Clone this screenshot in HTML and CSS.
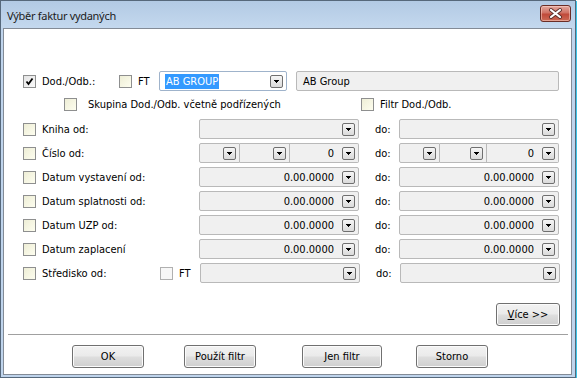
FILE: index.html
```html
<!DOCTYPE html>
<html lang="cs">
<head>
    <meta charset="UTF-8">
    <title>Výběr faktur vydaných</title>
    <link rel="stylesheet" href="styles.css">
</head>
<body>
    <div class="window">
        <div class="titlebar">
            <span class="title">Výběr faktur vydaných</span>
            <span class="close">
                <svg width="29" height="15" viewBox="0 0 29 15">
                    <path d="M10 4 L19 11 M19 4 L10 11" stroke="#5a2f2a" stroke-width="4" stroke-linecap="round"/>
                    <path d="M10 4 L19 11 M19 4 L10 11" stroke="#fff" stroke-width="2.2" stroke-linecap="round"/>
                </svg>
            </span>
        </div>

        <div class="client">
            <!-- odberatel -->
            <div class="row row-first">
                <span class="cb checked">
                    <svg width="11" height="11" viewBox="0 0 11 11"><path d="M2.5 5.5 L4.5 8 L8.5 2.5" stroke="#000" stroke-width="1.8" fill="none"/></svg>
                </span>
                <span class="lbl w-dod">Dod./Odb.:</span>
                <span class="cb"></span>
                <span class="lbl w-ft">FT</span>
                <div class="combo"><span class="sel">AB GROUP</span><span class="dd"></span></div>
                <div class="field name">AB Group</div>
            </div>

            <div class="row row-sub">
                <span class="cb"></span>
                <span class="lbl w-skup">Skupina Dod./Odb. včetně podřízených</span>
                <span class="cb"></span>
                <span class="lbl">Filtr Dod./Odb.</span>
            </div>

            <div class="row row-kniha">
                <span class="cb"></span>
                <span class="lbl w-main">Kniha od:</span>
                <div class="field od"><span class="val"></span><span class="dd"></span></div>
                <span class="lbl w-do">do:</span>
                <div class="field do"><span class="val"></span><span class="dd"></span></div>
            </div>

            <div class="row">
                <span class="cb"></span>
                <span class="lbl w-main">Číslo od:</span>
                <div class="split od">
                    <div class="field s1"><span class="val"></span><span class="dd"></span></div>
                    <div class="field s2"><span class="val"></span><span class="dd"></span></div>
                    <div class="field s3"><span class="val">0</span><span class="dd"></span></div>
                </div>
                <span class="lbl w-do">do:</span>
                <div class="split do">
                    <div class="field s1"><span class="val"></span><span class="dd"></span></div>
                    <div class="field s2"><span class="val"></span><span class="dd"></span></div>
                    <div class="field s3"><span class="val">0</span><span class="dd"></span></div>
                </div>
            </div>

            <div class="row">
                <span class="cb"></span>
                <span class="lbl w-main">Datum vystavení od:</span>
                <div class="field od"><span class="val">0.00.0000</span><span class="dd"></span></div>
                <span class="lbl w-do">do:</span>
                <div class="field do"><span class="val">0.00.0000</span><span class="dd"></span></div>
            </div>

            <div class="row">
                <span class="cb"></span>
                <span class="lbl w-main">Datum splatnosti od:</span>
                <div class="field od"><span class="val">0.00.0000</span><span class="dd"></span></div>
                <span class="lbl w-do">do:</span>
                <div class="field do"><span class="val">0.00.0000</span><span class="dd"></span></div>
            </div>

            <div class="row">
                <span class="cb"></span>
                <span class="lbl w-main">Datum UZP od:</span>
                <div class="field od"><span class="val">0.00.0000</span><span class="dd"></span></div>
                <span class="lbl w-do">do:</span>
                <div class="field do"><span class="val">0.00.0000</span><span class="dd"></span></div>
            </div>

            <div class="row">
                <span class="cb"></span>
                <span class="lbl w-main">Datum zaplacení</span>
                <div class="field od"><span class="val">0.00.0000</span><span class="dd"></span></div>
                <span class="lbl w-do">do:</span>
                <div class="field do"><span class="val">0.00.0000</span><span class="dd"></span></div>
            </div>

            <div class="row">
                <span class="cb"></span>
                <span class="lbl w-stred">Středisko od:</span>
                <span class="cb off"></span>
                <span class="lbl w-ft">FT</span>
                <div class="field od"><span class="val"></span><span class="dd"></span></div>
                <span class="lbl w-do">do:</span>
                <div class="field do"><span class="val"></span><span class="dd"></span></div>
            </div>

            <div class="more-row">
                <button class="btn btn-more"><u>V</u>íce &gt;&gt;</button>
            </div>

            <div class="separator"></div>

            <div class="buttons">
                <button class="btn btn-ok">OK</button>
                <button class="btn btn-use">Použít filtr</button>
                <button class="btn btn-only">Jen filtr</button>
                <button class="btn btn-cancel">Storno</button>
            </div>
        </div>
    </div>
</body>
</html>
```

FILE: styles.css
```css
* {
    box-sizing: border-box;
}
body {
    margin: 0;
    background: #fff;
    font-family: "DejaVu Sans Condensed", "DejaVu Sans", sans-serif;
    font-size: 11px;
    color: #000;
}
.window {
    width: 576px;
    height: 378px;
    display: flex;
    flex-direction: column;
    padding: 0 3px 2px 2px;
    background: #bfd4ec;
    border: 1px solid #56687b;
    box-shadow: 1px 1px 0 #3cc4e8;
}
.titlebar {
    height: 27px;
    margin: 0 -3px 0 -2px;
    padding: 4px 4px 0 6px;
    display: flex;
    justify-content: space-between;
    align-items: flex-start;
    background: linear-gradient(#b2cae4, #c4d8ee);
}
.title {
    align-self: center;
    margin-top: -3px;
    font-family: "Noto Sans", sans-serif;
    font-size: 11px;
    letter-spacing: -0.3px;
    color: #1b1b1b;
}
.close {
    width: 31px;
    height: 17px;
    display: flex;
    align-items: center;
    justify-content: center;
    border: 1px solid #6a2d26;
    border-radius: 3px;
    background: linear-gradient(#e3a99f, #d07264 45%, #c04a3a 55%, #cc6a55);
    box-shadow: inset 0 0 0 1px rgba(255, 220, 210, 0.5);
}
.client {
    flex: 1;
    display: flex;
    flex-direction: column;
    background: #fff;
    border: 1px solid #838b96;
}

/* rows */
.row {
    display: flex;
    align-items: center;
    height: 20px;
    margin-top: 4px;
    padding-left: 19px;
}
.row-first {
    margin-top: 42px;
}
.row-sub {
    height: 16px;
    margin-top: 5px;
    padding-left: 60px;
}
.row-kniha {
    margin-top: 7px;
}
.lbl {
    flex: none;
    white-space: nowrap;
    margin-left: 6px;
}
.w-dod { width: 77px; }
.w-ft { width: 21px; }
.w-main { width: 157px; }
.w-stred { width: 118px; }
.w-do { width: 24px; margin-left: 16px; }
.row-sub .w-skup { width: 273px; margin-left: 11px; }

/* checkbox */
.cb {
    flex: none;
    width: 13px;
    height: 13px;
    display: flex;
    align-items: center;
    justify-content: center;
    border: 1px solid #8e8f8f;
    background: linear-gradient(135deg, #eeeed6, #fdfdef);
}
.cb.checked {
    background: linear-gradient(135deg, #e4e4e4, #fafafa);
}
.cb.off {
    background: #f7f7f7;
    border-color: #b0b0b0;
}

/* fields */
.field {
    flex: none;
    height: 20px;
    display: flex;
    align-items: center;
    padding: 0 3px 0 6px;
    background: #f0f0f0;
    border: 1px solid #b9b9b9;
    border-radius: 2px;
}
.field .val {
    flex: 1;
    text-align: right;
    padding-right: 8px;
}
.field.od { width: 160px; }
.field.do { width: 160px; }
.field.name {
    width: 263px;
    margin-left: 9px;
}
.split {
    flex: none;
    display: flex;
}
.split .field {
    border-radius: 0;
}
.split .field + .field {
    border-left: none;
}
.split .field:first-child { border-radius: 2px 0 0 2px; }
.split .field:last-child { border-radius: 0 2px 2px 0; }
.split.od .s1 { width: 41px; }
.split.od .s2 { width: 50px; }
.split.od .s3 { width: 69px; }
.split.do .s1 { width: 41px; }
.split.do .s2 { width: 47px; }
.split.do .s3 { width: 72px; }

.combo {
    flex: none;
    width: 128px;
    height: 20px;
    display: flex;
    align-items: center;
    justify-content: space-between;
    padding: 0 3px 0 5px;
    background: #fff;
    border: 1px solid #9fb3cb;
    border-radius: 2px;
}
.sel {
    background: #3399ff;
    color: #fff;
    padding: 1px 1px;
}

/* drop-down arrow button */
.dd {
    flex: none;
    position: relative;
    width: 13px;
    height: 13px;
    border: 1px solid #6f6f6f;
    border-radius: 2px;
    background: linear-gradient(#f6f6f6, #dadada);
}
.dd::after {
    content: "";
    position: absolute;
    left: 5px;
    top: 4px;
    width: 1px;
    height: 1px;
    background: #000;
    box-shadow: -2px 0 #000, -1px 0 #000, 1px 0 #000, 2px 0 #000,
        -1px 1px #000, 0 1px #000, 1px 1px #000, 0 2px #000;
}

/* buttons */
.btn {
    height: 23px;
    padding: 0;
    font-family: inherit;
    font-size: 11px;
    color: #000;
    border: 1px solid #707070;
    border-radius: 3px;
    background: linear-gradient(#f2f2f2, #ebebeb 45%, #dddddd 55%, #cfcfcf);
    box-shadow: inset 0 0 0 1px #fbfbfb;
}
.more-row {
    display: flex;
    justify-content: flex-end;
    margin-top: 20px;
    padding-right: 11px;
}
.btn-more { width: 64px; }
.separator {
    margin: 8px 3px 0 4px;
    border-top: 1px solid #a0a0a0;
    border-bottom: 1px solid #fff;
}
.buttons {
    display: flex;
    margin-top: 9px;
    padding-left: 68px;
}
.btn-ok { width: 72px; }
.btn-use { width: 72px; margin-left: 40px; }
.btn-only { width: 80px; margin-left: 46px; }
.btn-cancel { width: 72px; margin-left: 34px; }
```
